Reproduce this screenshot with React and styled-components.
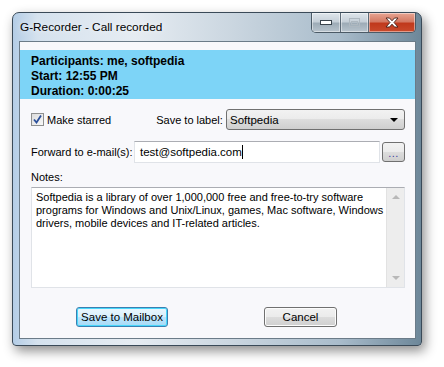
import styled, { createGlobalStyle } from "styled-components";

const GlobalStyle = createGlobalStyle`
  body {
    margin: 0;
    background: #ffffff;
    font-family: "Liberation Sans", Arial, sans-serif;
  }
`;

const Page = styled.div`
  width: 444px;
  height: 367px;
  padding: 12px 0 0 12px;
  box-sizing: border-box;
`;

const Window = styled.div`
  width: 410px;
  height: 334px;
  box-sizing: border-box;
  border: 1px solid #3a4a58;
  border-radius: 7px 7px 4px 4px;
  background: linear-gradient(
    to right,
    #b4cde6 0%,
    #d5e2ee 6%,
    #e6ecf2 30%,
    #c9d5df 55%,
    #a9bccb 80%,
    #6d8799 100%
  );
  box-shadow: 3px 5px 12px rgba(0, 0, 0, 0.45);
  display: flex;
  flex-direction: column;
  padding: 0 5px 6px 6px;
  position: relative;
`;

const TitleBar = styled.div`
  height: 28px;
  display: flex;
  align-items: center;
  padding-left: 1px;
  font-size: 11.8px;
  color: #000;
  white-space: nowrap;
  text-shadow: 0 0 6px rgba(255, 255, 255, 0.9);
`;

const Caption = styled.div`
  position: absolute;
  top: 0;
  right: 5px;
  display: flex;
  height: 19px;
  border: 1px solid #4b5a66;
  border-top: none;
  border-radius: 0 0 5px 5px;
  overflow: hidden;
`;

const CapButton = styled.div`
  width: ${(p) => p.$w}px;
  display: flex;
  align-items: center;
  justify-content: center;
  border-left: ${(p) => (p.$first ? "none" : "1px solid #5c6a76")};
  background: ${(p) =>
    p.$close
      ? "linear-gradient(#e8a593 0%, #d47a64 45%, #c0391c 55%, #c94a2c 100%)"
      : "linear-gradient(#dfe6ec 0%, #c6d0d8 45%, #9eacb7 55%, #b8c4cd 100%)"};
  box-shadow: inset 0 0 0 1px rgba(255, 255, 255, 0.45);
`;

const Client = styled.div`
  flex: 1;
  border: 1px solid #6b7b88;
  background: #f8f8fb;
  display: flex;
  flex-direction: column;
  padding-top: 8px;
`;

const Banner = styled.div`
  background: #7dd4f7;
  height: 49px;
  padding: 4px 11px 0;
  box-sizing: border-box;
  font-weight: bold;
  font-size: 12px;
  line-height: 15px;
  color: #000;
  white-space: nowrap;
`;

const Form = styled.div`
  padding: 10px 10px 0 11px;
  display: flex;
  flex-direction: column;
  font-size: 11px;
  color: #000;
  white-space: nowrap;
`;

const Row = styled.div`
  display: flex;
  align-items: center;
  height: ${(p) => p.$h}px;
  margin-bottom: ${(p) => p.$mb || 0}px;
`;

const CheckLabel = styled.label`
  display: flex;
  align-items: center;
  gap: 3px;
  flex-shrink: 0;
`;

const CheckBox = styled.span`
  width: 11px;
  height: 11px;
  border: 1px solid #8e8f8f;
  background: linear-gradient(135deg, #dcdcdc, #f8f8f8);
  display: flex;
  align-items: center;
  justify-content: center;
`;

const LabelText = styled.span`
  flex-shrink: 0;
  margin-left: ${(p) => p.$ml || 0}px;
  margin-right: ${(p) => p.$mr || 0}px;
`;

const Select = styled.div`
  width: 179px;
  height: 21px;
  flex-shrink: 0;
  margin-left: auto;
  box-sizing: border-box;
  border: 1px solid #707070;
  border-radius: 3px;
  background: linear-gradient(#f2f2f2 0%, #ebebeb 50%, #dddddd 50%, #cfcfcf 100%);
  display: flex;
  align-items: center;
  justify-content: space-between;
  padding: 0 6px 0 3px;
  font-size: 11.5px;
`;

const Input = styled.div`
  width: 246px;
  height: 22px;
  flex-shrink: 0;
  margin-left: auto;
  box-sizing: border-box;
  border: 1px solid #e0e3e8;
  border-top-color: #abadb3;
  background: #fff;
  display: flex;
  align-items: center;
  padding-left: 5px;
  font-size: 11.5px;
`;

const Caret = styled.span`
  width: 1px;
  height: 14px;
  background: #000;
`;

const SmallButton = styled.div`
  width: 23px;
  height: 20px;
  flex-shrink: 0;
  margin-left: 2px;
  box-sizing: border-box;
  border: 1px solid #707070;
  border-radius: 3px;
  background: linear-gradient(#f2f2f2 0%, #ebebeb 50%, #dddddd 50%, #cfcfcf 100%);
  display: flex;
  align-items: flex-end;
  justify-content: center;
  padding-bottom: 5px;
  font-size: 11px;
  line-height: 6px;
  color: #3c3ca0;
  letter-spacing: 0.5px;
`;

const NotesLabel = styled.div`
  height: 15px;
  line-height: 15px;
  margin-bottom: 2px;
`;

const Notes = styled.div`
  height: 101px;
  box-sizing: border-box;
  border: 1px solid #e0e3e8;
  border-top-color: #abadb3;
  background: #fff;
  display: flex;
`;

const NotesText = styled.div`
  flex: 1;
  padding: 3px 1px 3px 4px;
  font-size: 11px;
  line-height: 13px;
  overflow: hidden;
`;

const ScrollBar = styled.div`
  width: 17px;
  flex-shrink: 0;
  background: #ededed;
  border-left: 1px solid #e2e2e2;
  display: flex;
  flex-direction: column;
  justify-content: space-between;
  align-items: center;
  padding: 7px 0;
`;

const Arrow = styled.span`
  width: 0;
  height: 0;
  border-left: 4px solid transparent;
  border-right: 4px solid transparent;
  ${(p) =>
    p.$up ? "border-bottom: 4px solid #b8b8b8;" : "border-top: 4px solid #b8b8b8;"}
`;

const Buttons = styled.div`
  display: flex;
  padding: 19px 0 0 45px;
`;

const Button = styled.div`
  width: ${(p) => p.$w}px;
  height: 20px;
  flex-shrink: 0;
  margin-right: ${(p) => p.$mr || 0}px;
  box-sizing: border-box;
  border: 1px solid ${(p) => (p.$default ? "#3c7fb1" : "#707070")};
  border-radius: 3px;
  background: ${(p) =>
    p.$default
      ? "linear-gradient(#eaf6fd 0%, #d9f0fc 50%, #bee6fd 50%, #a7d9f5 100%)"
      : "linear-gradient(#f2f2f2 0%, #ebebeb 50%, #dddddd 50%, #cfcfcf 100%)"};
  box-shadow: ${(p) =>
    p.$default ? "inset 0 0 0 1px #48d8fb" : "inset 0 0 0 1px #fcfcfc"};
  display: flex;
  align-items: center;
  justify-content: center;
  font-size: 11.5px;
`;

const App = () => {
  return (
    <>
      <GlobalStyle />
      <Page>
        <Window>
          <TitleBar>G-Recorder - Call recorded</TitleBar>
          <Caption>
            <CapButton $w={28} $first>
              <svg width="12" height="5" viewBox="0 0 12 5">
                <rect x="0.5" y="0.5" width="11" height="4" fill="#fff" stroke="#39434b" />
              </svg>
            </CapButton>
            <CapButton $w={27}>
              <svg width="11" height="9" viewBox="0 0 11 9">
                <rect x="0.5" y="0.5" width="10" height="8" fill="none" stroke="#aeb8c0" />
                <rect x="2.5" y="3.5" width="6" height="3" fill="none" stroke="#aeb8c0" />
              </svg>
            </CapButton>
            <CapButton $w={46} $close>
              <svg width="14" height="11" viewBox="0 0 14 11">
                <path
                  d="M1 1 L4.5 1 L7 3.8 L9.5 1 L13 1 L9 5.5 L13 10 L9.5 10 L7 7.2 L4.5 10 L1 10 L5 5.5 Z"
                  fill="#fff"
                  stroke="#43201a"
                  strokeWidth="0.9"
                />
              </svg>
            </CapButton>
          </Caption>
          <Client>
            <Banner>
              <div>Participants: me, softpedia</div>
              <div>Start: 12:55 PM</div>
              <div>Duration: 0:00:25</div>
            </Banner>
            <Form>
              <Row $h={21} $mb={11}>
                <CheckLabel>
                  <CheckBox>
                    <svg width="9" height="9" viewBox="0 0 9 9">
                      <path d="M1 4.5 L3.5 7.5 L8 0.5" fill="none" stroke="#2a4f9a" strokeWidth="1.8" />
                    </svg>
                  </CheckBox>
                  <span>Make starred</span>
                </CheckLabel>
                <LabelText $ml={45}>Save to label:</LabelText>
                <Select>
                  <span>Softpedia</span>
                  <svg width="8" height="4" viewBox="0 0 8 4">
                    <path d="M0 0 L8 0 L4 4 Z" fill="#000" />
                  </svg>
                </Select>
              </Row>
              <Row $h={22} $mb={7}>
                <LabelText>Forward to e-mail(s):</LabelText>
                <Input>
                  test@softpedia.com
                  <Caret />
                </Input>
                <SmallButton>...</SmallButton>
              </Row>
              <NotesLabel>Notes:</NotesLabel>
              <Notes>
                <NotesText>
                  Softpedia is a library of over 1,000,000 free and free-to-try software
                  <br />
                  programs for Windows and Unix/Linux, games, Mac software, Windows
                  <br />
                  drivers, mobile devices and IT-related articles.
                </NotesText>
                <ScrollBar>
                  <Arrow $up />
                  <Arrow />
                </ScrollBar>
              </Notes>
              <Buttons>
                <Button $w={92} $mr={96} $default>
                  Save to Mailbox
                </Button>
                <Button $w={73}>Cancel</Button>
              </Buttons>
            </Form>
          </Client>
        </Window>
      </Page>
    </>
  );
};

export default App;
